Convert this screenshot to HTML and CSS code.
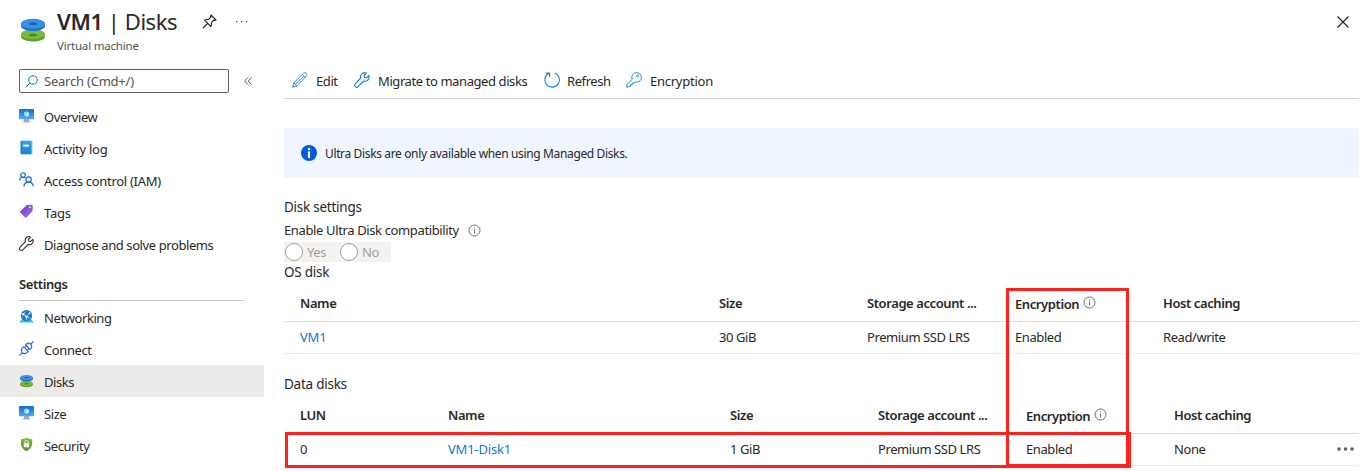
FILE: index.html
```html
<!DOCTYPE html>
<html lang="en">
<head>
<meta charset="utf-8">
<title>VM1 | Disks</title>
<link rel="stylesheet" href="styles.css">
</head>
<body>
<svg class="defs" width="0" height="0" aria-hidden="true">
  <defs>
    <linearGradient id="g-blue" x1="0" y1="0" x2="0" y2="1"><stop offset="0" stop-color="#0f6fd0"/><stop offset="1" stop-color="#58a6f4"/></linearGradient>
    <linearGradient id="g-book" x1="0" y1="0" x2="0" y2="1"><stop offset="0" stop-color="#39a5e4"/><stop offset="1" stop-color="#1785d3"/></linearGradient>
    <linearGradient id="g-tag" x1="0" y1="0" x2="1" y2="1"><stop offset="0" stop-color="#6d35c9"/><stop offset="1" stop-color="#a878e0"/></linearGradient>
    <linearGradient id="g-shield" x1="0" y1="0" x2="0" y2="1"><stop offset="0" stop-color="#7cc142"/><stop offset="1" stop-color="#539326"/></linearGradient>
    <symbol id="disks" viewBox="0 0 24 24">
      <path d="M0 16.500v2C0 21.300 5.300 23.500 12 23.500s12-2.200 12-5v-2z" fill="#5f9f2e"/>
      <ellipse cx="12" cy="16.300" rx="12" ry="5" fill="#78b93e"/>
      <ellipse cx="12" cy="17" rx="4" ry="1.300" fill="#4c8424"/>
      <path d="M0 5.500v2.500c0 2.800 5.300 5 12 5s12-2.200 12-5V5.500z" fill="#1a72d0"/>
      <ellipse cx="12" cy="5.700" rx="12" ry="5" fill="#3c8fe6"/>
      <ellipse cx="12" cy="5.800" rx="4" ry="1.300" fill="#1560b4"/>
    </symbol>
    <symbol id="monitor" viewBox="0 0 16 16">
      <path d="M5.500 11.500h5l.5 3h1v1H4v-1h1z" fill="#a9adb0"/>
      <rect x="0" y="1" width="16" height="11" rx=".5" fill="url(#g-blue)"/>
      <path d="M8 3.500l2.500 1.400v3L8 9.400 5.500 7.900v-3z" fill="#8be3f5"/>
      <path d="M8 6.300l2.500-1.400v3L8 9.400z" fill="#c4f3fb"/>
    </symbol>
    <symbol id="wrench" viewBox="0 0 16 16">
      <path d="M14.800 3.600L12.500 5.800 10.400 5.500 10.100 3.500 12.400 1.200C10.700.3 8.700.7 7.500 2 6.500 3.200 6.300 4.700 6.800 6L1.200 11.800c-.8.900-.8 2 0 2.900.9.800 2.100.8 2.900 0L9.800 9c1.500.5 3 .2 4.100-.9 1.200-1.200 1.600-3 .9-4.500z" fill="none" stroke="currentColor" stroke-width="1.100" stroke-linejoin="round"/>
    </symbol>
    <symbol id="info" viewBox="0 0 13 13">
      <circle cx="6.500" cy="6.500" r="5.500" fill="none" stroke="#605e5c" stroke-width=".9"/>
      <path d="M6.500 5.500v4M6.500 3.400v1" stroke="#605e5c" stroke-width=".9"/>
    </symbol>
  </defs>
</svg>

<div class="blade">
  <header class="header">
    <svg class="header-icon" viewBox="0 0 24 24"><use href="#disks"/></svg>
    <div class="heading">
      <div class="title-row">
        <h1 class="title"><b>VM1</b> | Disks</h1>
        <svg class="pin" viewBox="0 0 15 15"><path d="M9 1l5 5-1.300.5L12 6 9.300 8.700c.5 1.500.3 2.800-.5 3.800L2.600 6.200c1.100-.8 2.300-.9 3.700-.5L9 3l-.5-.8zM5.500 9.500L1 14" fill="none" stroke="#252423" stroke-width="1.100" stroke-linejoin="round"/></svg>
        <svg class="more" viewBox="0 0 13 3"><path d="M1 1h1.300v1.300H1zM6 1h1.300v1.300H6zM11 1h1.300v1.300H11z" fill="#484644"/></svg>
      </div>
      <div class="subtitle">Virtual machine</div>
    </div>
    <svg class="close" viewBox="0 0 12 12"><path d="M.5.5l11 11M11.500.5l-11 11" stroke="#201f1e" stroke-width="1.100"/></svg>
  </header>

  <div class="content">
    <nav class="sidebar">
      <div class="search-row">
        <div class="search">
          <svg class="search-icon" viewBox="0 0 13 13"><circle cx="8" cy="5" r="4.300" fill="none" stroke="#1a73d1"/><path d="M4.900 8.100L.6 12.400" stroke="#1a73d1"/></svg>
          <span class="search-text">Search (Cmd+/)</span>
        </div>
        <svg class="collapse" viewBox="0 0 8 8"><path d="M4 .5L.7 4 4 7.500M7.500.5L4.200 4l3.300 3.500" fill="none" stroke="#484644" stroke-width=".9"/></svg>
      </div>

      <a class="item"><svg class="icon" viewBox="0 0 16 16"><use href="#monitor"/></svg><span>Overview</span></a>
      <a class="item"><svg class="icon" viewBox="0 0 16 16"><path d="M3 .8h10.500c.6 0 1 .4 1 1v12.400c0 .6-.4 1-1 1H3z" fill="#8fd0f3"/><rect x="1.500" y=".8" width="11.800" height="14.400" rx=".8" fill="url(#g-book)"/><path d="M2.900.8v14.400" stroke="#1374bf" stroke-width=".7"/><rect x="4.500" y="5" width="6" height="2" fill="#fff"/></svg><span class="loose">Activity log</span></a>
      <a class="item"><svg class="icon" viewBox="0 0 16 16"><g fill="none" stroke="#1c66dd" stroke-width="1.300"><circle cx="4.300" cy="3.200" r="2.400"/><path d="M.6 9c.1-2 1.600-3.400 3.700-3.400 1 0 1.700.3 2.300.8"/><circle cx="10.200" cy="8" r="2.900"/><path d="M5.200 15.500c.3-2.600 2.300-4.600 5-4.600s4.800 2 5 4.600"/></g></svg><span class="medium">Access control (IAM)</span></a>
      <a class="item"><svg class="icon" viewBox="0 0 16 16"><path d="M8.800 1.100l4.700-.3c.7 0 1.200.5 1.200 1.200L14.500 7c0 .4-.2.800-.5 1.100l-6 6.400c-.4.4-1 .4-1.400 0L1.400 9c-.4-.4-.4-1 0-1.400l6.300-6c.3-.3.700-.5 1.100-.5z" fill="url(#g-tag)"/><circle cx="11.600" cy="3.300" r="1" fill="#fff"/></svg><span class="loose">Tags</span></a>
      <a class="item"><svg class="icon dark" viewBox="0 0 16 16"><use href="#wrench"/></svg><span>Diagnose and solve problems</span></a>

      <h2 class="group">Settings</h2>

      <div class="group-items">
        <a class="item"><svg class="icon" viewBox="0 0 16 16"><path d="M3 11h10l2.800 3.500H.2z" fill="#38c6b4"/><circle cx="8" cy="7" r="6" fill="#1c76d0"/><path d="M4.500 5.500L8 8l3.500-3.500M8 8v3.500M8 8l3.500 2M4.500 5.500L7 3" fill="none" stroke="#bfe3fa" stroke-width=".9"/><circle cx="4.500" cy="5.500" r="1.300" fill="#fff"/><circle cx="8" cy="8.300" r="1.300" fill="#fff"/><circle cx="11.300" cy="4.600" r="1.100" fill="#d6effc"/></svg><span>Networking</span></a>
        <a class="item"><svg class="icon" viewBox="0 0 16 16"><g fill="none" stroke="#1c66dd" stroke-width="1.200"><path d="M.5 15.500l3-3M12.500 3.500l3-3M3.600 12.400c-1.500-1.700-1.300-3.800.2-5.300l1.100-1 5 5-1.100 1.100c-1.500 1.500-3.600 1.700-5.200.2zM7 4.200l1-1c1.500-1.500 3.300-1.200 4.500.3 1.400 1.300 1.600 3.200.2 4.600l-1 .9zM6 7.200l1.800-1.800M8.700 10l1.800-1.800"/></g></svg><span>Connect</span></a>
        <a class="item selected"><svg class="icon disk-small" viewBox="0 0 24 24"><use href="#disks"/></svg><span>Disks</span></a>
        <a class="item"><svg class="icon" viewBox="0 0 16 16"><use href="#monitor"/></svg><span>Size</span></a>
        <a class="item"><svg class="icon" viewBox="0 0 16 16"><path d="M8 .5c1.500 1.300 3.700 1.700 6 1.800v5c0 4-3.500 6.500-6 8-2.500-1.500-6-4-6-8v-5C4.300 2.200 6.500 1.800 8 .5z" fill="url(#g-shield)"/><rect x="5.200" y="6.600" width="5.600" height="4.400" rx=".5" fill="#fff"/><path d="M6.300 6.800V5.300c0-2.200 3.400-2.200 3.400 0v1.500" fill="none" stroke="#fff"/></svg><span>Security</span></a>
      </div>
    </nav>

    <main class="main">
      <div class="toolbar">
        <a class="command c-edit"><svg class="cmd-icon" viewBox="0 0 16 16"><path d="M.8 15.200l1-4.300L11.600 1.200c.8-.8 2-.7 2.700 0s.9 1.900.1 2.700L4.900 13.900zM10.300 2.500l3 3M1.800 10.900l3.100 3M12 4L3.300 12.400" fill="none" stroke="#1580d6" stroke-width=".9"/></svg><span>Edit</span></a>
        <a class="command c-migrate"><svg class="cmd-icon" viewBox="0 0 16 16"><use href="#wrench"/></svg><span>Migrate to managed disks</span></a>
        <a class="command c-refresh"><svg class="cmd-icon" viewBox="0 0 16 16"><path d="M10.500.9a7.300 7.300 0 1 1-5.700.4M1.600 1h4v4" fill="none" stroke="#1580d6" stroke-width="1.100"/></svg><span>Refresh</span></a>
        <a class="command c-encrypt"><svg class="cmd-icon" viewBox="0 0 16 16"><path d="M6.100 7.400C5.200 4 7.200.7 10.500.7c2.700 0 4.800 2.100 4.800 4.800 0 3.200-3 5.300-6.300 4.500L7.900 11.100H6.300v1.600H4.700v1.600H3.100l-.8.900H.7v-2.400z" fill="none" stroke="#1580d6"/><circle cx="11.600" cy="4.300" r="1" fill="none" stroke="#1580d6" stroke-width=".8"/></svg><span class="loose">Encryption</span></a>
      </div>

      <div class="banner">
        <svg class="banner-icon" viewBox="0 0 16 16"><circle cx="8" cy="8" r="8" fill="#015cda"/><path d="M8 6.500V13M8 3v2.200" stroke="#fff" stroke-width="2.200"/></svg>
        <span class="banner-text">Ultra Disks are only available when using Managed Disks.</span>
      </div>

      <div class="section-title">Disk settings</div>
      <div class="ultra"><span>Enable Ultra Disk compatibility</span><svg class="info" viewBox="0 0 13 13"><use href="#info"/></svg></div>
      <div class="radios">
        <span class="radio"></span><span class="radio-label yes">Yes</span>
        <span class="radio"></span><span class="radio-label">No</span>
      </div>
      <div class="section-title os">OS disk</div>

      <div class="row head os-grid">
        <span>Name</span><span>Size</span><span>Storage account ...</span>
        <span class="enc">Encryption<svg class="info" viewBox="0 0 13 13"><use href="#info"/></svg></span><span>Host caching</span>
      </div>
      <div class="row os-grid">
        <a class="link">VM1</a><span>30 GiB</span><span>Premium SSD LRS</span><span>Enabled</span><span>Read/write</span>
      </div>

      <div class="section-title data">Data disks</div>
      <div class="row head data-grid">
        <span>LUN</span><span>Name</span><span>Size</span><span>Storage account ...</span>
        <span class="enc">Encryption<svg class="info" viewBox="0 0 13 13"><use href="#info"/></svg></span><span>Host caching</span>
      </div>
      <div class="row data-grid">
        <span>0</span><a class="link">VM1-Disk1</a><span>1 GiB</span><span>Premium SSD LRS</span><span>Enabled</span><span>None</span>
        <svg class="row-more" viewBox="0 0 17 4"><circle cx="2" cy="2" r="1.800"/><circle cx="8.500" cy="2" r="1.800"/><circle cx="15" cy="2" r="1.800"/></svg>
      </div>
    </main>
  </div>

  <div class="callout callout-column"></div>
  <div class="callout callout-row"></div>
</div>
</body>
</html>
```
FILE: styles.css
```css
* { box-sizing: border-box; }

body {
  margin: 0;
  background: #fff;
  color: #292827;
  font: 13px/18px "Noto Sans", "Open Sans", sans-serif;
  letter-spacing: -0.41px;
}

svg { display: block; flex: none; overflow: visible; }
.defs { position: absolute; }
.loose { letter-spacing: -0.25px; }
.medium { letter-spacing: -0.3px; }

.blade {
  position: relative;
  width: 1370px;
  height: 471px;
  overflow: hidden;
}

.header {
  display: flex;
  align-items: flex-start;
  height: 64px;
  padding: 0 21px 0 21px;
}
.header-icon { width: 24px; height: 24px; margin-top: 18px; }
.heading { flex: 1; margin-left: 12px; padding-top: 7px; }
.title-row { display: flex; align-items: center; height: 28px; }
.title {
  width: 121px;
  margin: 0;
  font-size: 22px;
  line-height: 28px;
  font-weight: 400;
  letter-spacing: -0.45px;
  white-space: nowrap;
}
.title b { font-weight: 600; }
.pin { width: 15px; height: 15px; margin-left: 24px; }
.more { width: 13px; height: 3px; margin-left: 18px; }
.subtitle { margin-top: 3px; font-size: 11.500px; line-height: 16px; letter-spacing: -0.2px; color: #55534f; }
.close { width: 12px; height: 12px; margin-top: 16px; }

.content { display: flex; }

.sidebar { width: 264px; }
.search-row { display: flex; align-items: center; height: 37px; padding-left: 19px; padding-bottom: 3px; }
.search {
  display: flex;
  align-items: center;
  width: 210px;
  height: 24px;
  padding-left: 5px;
  border: 1px solid #605e5c;
  border-radius: 2px;
  color: #55534f;
  letter-spacing: -0.22px;
}
.search-icon { width: 13px; height: 13px; margin-right: 6px; }
.collapse { width: 8px; height: 8px; margin-left: 15px; }

.item {
  display: flex;
  align-items: center;
  gap: 10px;
  height: 32px;
  padding-left: 19px;
  white-space: nowrap;
}
.item.selected { background: #edebe9; }
.icon { width: 15px; height: 15px; margin-top: -3px; }
.dark { color: #252423; }
.disk-small { height: 14px; padding: 0 1px; }
.group {
  height: 40px;
  width: 225px;
  margin: 0 0 0 19px;
  padding-top: 14px;
  border-bottom: 1px solid #c8c6c4;
  font-size: 13px;
  line-height: 18px;
  font-weight: 600;
}
.group-items .icon { margin-top: -1px; }
.group-items span { padding-top: 2px; }

.main { width: 1075px; margin-left: 20px; }
.toolbar { display: flex; height: 35px; padding-left: 8px; border-bottom: 1px solid #d2d0ce; }
.command { display: flex; height: 34px; gap: 8px; white-space: nowrap; }
.command span { padding-top: 8px; }
.cmd-icon { width: 16px; height: 16px; margin-top: 8px; color: #1580d6; }
.c-edit { width: 62px; }
.c-migrate { width: 190px; }
.c-refresh { width: 82px; gap: 7px; }

.banner {
  display: flex;
  align-items: center;
  height: 50px;
  margin-top: 29px;
  padding-left: 17px;
  border-radius: 2px;
  background: #eff6ff;
  font-size: 12px;
  letter-spacing: -0.36px;
}
.banner-icon { width: 16px; height: 16px; margin-right: 8px; }
.banner-text { padding-top: 2px; }

.section-title { margin-top: 20px; font-size: 13.500px; letter-spacing: -0.25px; }
.ultra { display: flex; align-items: center; gap: 9px; height: 18px; margin-top: 5px; letter-spacing: -0.37px; }
.info { width: 13px; height: 13px; }
.radios {
  display: flex;
  align-items: center;
  width: 107px;
  height: 20px;
  margin-top: 3px;
  background: #f3f2f1;
  color: #a19f9d;
}
.radio { width: 18px; height: 18px; margin: 0 4px 0 1px; border: 1px solid #a19f9d; border-radius: 50%; background: #fff; }
.radio-label.yes { width: 32px; }
.section-title.os { margin-top: 1px; }

.row { display: grid; align-items: center; height: 32px; padding: 0 0 2px 16px; border-bottom: 1px solid #edebe9; white-space: nowrap; }
.row.head { height: 36px; margin-top: 5px; font-weight: 600; border-color: #e1dfdd; }
.os-grid { grid-template-columns: 419px 148px 148px 148px 180px; }
.data-grid { grid-template-columns: 148px 282px 148px 148px 148px 163px 17px; }
.enc { display: flex; align-items: center; gap: 4px; padding-top: 2px; }
.enc .info { margin-top: -3px; }
.link { color: #0f76d1; letter-spacing: -0.18px; }
.section-title.data { margin-top: 21px; }
.row-more { width: 17px; height: 4px; fill: #605e5c; }

/* Highlight frames drawn over the tables */
.callout { position: absolute; border: 3px solid #fc241e; }
.callout-column { left: 1006px; top: 288px; width: 123px; height: 179px; }
.callout-row { left: 285px; top: 432px; width: 846px; height: 36px; }
```
